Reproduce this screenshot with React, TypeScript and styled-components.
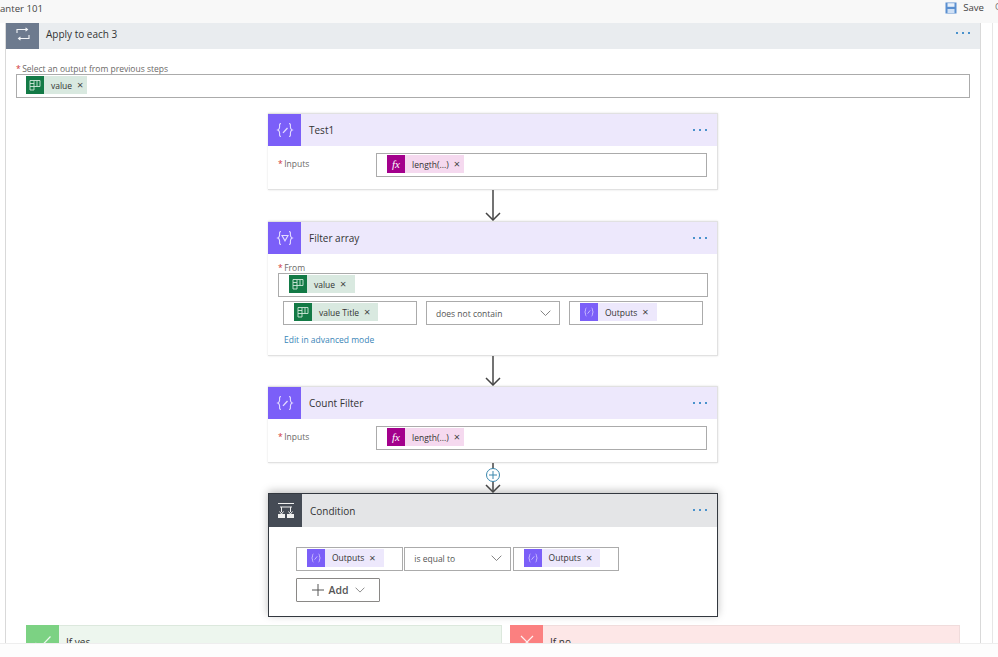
import React from "react";
import styled, { createGlobalStyle } from "styled-components";

const GlobalStyle = createGlobalStyle`
  html, body {
    margin: 0;
    padding: 0;
    background: #fff;
  }
  body {
    font-family: "Open Sans", "Noto Sans", "Liberation Sans", sans-serif;
    color: #3b3a39;
  }
`;

const Page = styled.div`
  width: 998px;
  height: 657px;
  overflow: hidden;
  display: flex;
  flex-direction: column;
  background: #fff;
`;

const TopBar = styled.header`
  flex: none;
  height: 23px;
  background: #f8f8f8;
  display: flex;
  align-items: center;
  font-size: 9.6px;
  color: #444;
  overflow: hidden;
`;

const FlowName = styled.span`
  margin-right: auto;
  padding-bottom: 6px;
`;

const SaveButton = styled.div`
  display: flex;
  align-items: center;
  gap: 6px;
  padding-bottom: 8px;
  margin-right: 11px;
`;

const Cut = styled.span`
  width: 3px;
  overflow: hidden;
  padding-bottom: 11px;
  font-size: 9px;
  color: #777;
`;

const Canvas = styled.main`
  flex: none;
  width: 993px;
  height: 620px;
  overflow: hidden;
  border-right: 1px solid #e6e6e6;
  box-sizing: border-box;
`;

const Loop = styled.section`
  width: 976px;
  margin-left: 5px;
  height: 100%;
  box-sizing: border-box;
  border-left: 1px solid #d9d9d9;
  border-right: 1px solid #d9d9d9;
`;

const Header = styled.div<{ $bg: string; $height: number }>`
  display: flex;
  align-items: center;
  height: ${(p) => p.$height}px;
  background: ${(p) => p.$bg};
`;

const LoopHeader = styled(Header)`
  & > span,
  & > div:last-child,
  svg {
    margin-bottom: 5px;
  }
`;

const HeaderIcon = styled.div<{ $bg: string }>`
  flex: none;
  width: 33px;
  height: 100%;
  background: ${(p) => p.$bg};
  display: flex;
  align-items: center;
  justify-content: center;
`;

const Title = styled.span<{ $gap: number }>`
  flex: 1;
  margin-left: ${(p) => p.$gap}px;
  font-size: 10px;
  color: #333;
`;

const Dots = styled.div`
  display: flex;
  gap: 4px;
  margin-right: 10px;
  padding-bottom: 1px;
`;

const Dot = styled.i`
  display: block;
  width: 2px;
  height: 2px;
  background: #4a92cc;
`;

const LoopBody = styled.div`
  padding: 15px 10px 0;
`;

const Label = styled.div`
  font-size: 8.5px;
  line-height: 10px;
  height: 10px;
  color: #6b6967;
  white-space: nowrap;
`;

const Star = styled.span`
  color: #d13438;
  margin-right: 1.5px;
`;

const Field = styled.div<{ $inset: number; $width?: number }>`
  display: flex;
  align-items: flex-start;
  box-sizing: border-box;
  height: 24px;
  width: ${(p) => (p.$width ? `${p.$width}px` : "100%")};
  flex: none;
  padding: 1px 0 0 ${(p) => p.$inset}px;
  border: 1px solid #ababab;
  background: #fff;
`;

const Token = styled.div<{ $bg: string }>`
  display: flex;
  align-items: center;
  height: 18px;
  background: ${(p) => p.$bg};
  font-size: 8.5px;
  color: #333;
  white-space: nowrap;
`;

const TokenIcon = styled.span<{ $bg: string }>`
  flex: none;
  width: 18px;
  height: 18px;
  background: ${(p) => p.$bg};
  display: flex;
  align-items: center;
  justify-content: center;
  color: #fff;
  font-family: "Liberation Serif", serif;
  font-style: italic;
  font-size: 11px;
`;

const TokenText = styled.span`
  margin-left: 7px;
`;

const Remove = styled.span<{ $end: number }>`
  margin: 0 ${(p) => p.$end}px 0 5px;
  font-size: 11px;
  line-height: 10px;
  color: #444;
`;

const Flow = styled.div`
  margin-top: 15px;
  display: flex;
  flex-direction: column;
  align-items: center;
`;

const Card = styled.article`
  width: 450px;
  box-sizing: border-box;
  border: 1px solid #e1e1e1;
  border-left: 0;
  box-shadow: 0 0 2px rgba(0, 0, 0, 0.12);
  background: #fff;
`;

const InputsBody = styled.div`
  display: flex;
  align-items: flex-start;
  padding: 7px 10px 12px 10px;
`;

const InputsLabel = styled(Label)`
  width: 98px;
  margin-top: 6px;
`;

const FilterBody = styled.div`
  padding: 9px 10px 0;
  height: 101px;
  box-sizing: border-box;
`;

const FilterRow = styled.div`
  display: flex;
  gap: 9.5px;
  margin: 4px 0 0 5px;
`;

const SelectBox = styled.div<{ $width: number }>`
  flex: none;
  width: ${(p) => p.$width}px;
  height: 24px;
  box-sizing: border-box;
  border: 1px solid #ababab;
  padding: 0 8px 0 9px;
  display: flex;
  align-items: center;
  justify-content: space-between;
  font-size: 8.5px;
  color: #555;
`;

const AdvancedLink = styled.a`
  display: block;
  margin: 9px 0 0 6px;
  font-size: 8.5px;
  color: #3a86b8;
`;

const ArrowWrap = styled.div<{ $height: number }>`
  position: relative;
  height: ${(p) => p.$height}px;
  width: 16px;
`;

const PlusBadge = styled.div`
  position: absolute;
  left: 1px;
  top: 5px;
  width: 14px;
  height: 14px;
  box-sizing: border-box;
  border: 1px solid #3a87ad;
  border-radius: 50%;
  background: #fff;
  display: flex;
  align-items: center;
  justify-content: center;
`;

const ConditionCard = styled.article`
  width: 450px;
  height: 124px;
  box-sizing: border-box;
  border: 1.5px solid #33383f;
  box-shadow: 0 -2px 8px rgba(0, 0, 0, 0.25);
  background: #fff;
`;

const ConditionRow = styled.div`
  display: flex;
  gap: 1.5px;
  margin: 19.5px 0 0 27px;
`;

const AddButton = styled.div`
  display: flex;
  align-items: center;
  box-sizing: border-box;
  width: 84px;
  height: 24px;
  margin: 7px 0 0 26.5px;
  padding-left: 15px;
  border: 1px solid #8a8886;
  border-radius: 1px;
  font-size: 10.5px;
  font-weight: 600;
  color: #555;
`;

const AddText = styled.span`
  margin: 0 6px 0 5px;
`;

const Branches = styled.div`
  display: grid;
  grid-template-columns: 476px 450px;
  gap: 8px;
  margin: 8px 10px 0;
`;

const Branch = styled.div<{ $bg: string; $line: string }>`
  height: 33px;
  display: flex;
  align-items: center;
  background: ${(p) => p.$bg};
  box-shadow: inset 0 0 0 1px ${(p) => p.$line};
`;

const BranchTitle = styled.span`
  margin-left: 7px;
  font-size: 10px;
  color: #333;
`;

const Footer = styled.div`
  flex: 1;
  background: #fdfdfd;
  border-top: 1px solid #eee;
`;

const Braces = ({ kind }: { kind: "edit" | "filter" }) => (
  <svg width="18" height="18" viewBox="0 0 18 18" fill="none" stroke="#e4dcff" strokeWidth="1.1">
    <path d="M5 2.5C3.2 2.5 3.6 4 3.6 6S3.6 8.3 1.8 9C3.6 9.7 3.6 10 3.6 12S3.2 15.5 5 15.5" />
    <path d="M13 2.5C14.8 2.5 14.4 4 14.4 6S14.4 8.3 16.2 9C14.4 9.7 14.4 10 14.4 12S14.8 15.5 13 15.5" />
    {kind === "edit" ? (
      <path d="M6.5 11.5L11 6.5L12 7.5L7.5 12.2Z" fill="#e4dcff" stroke="none" />
    ) : (
      <path d="M6 6.5H12L9 11.8Z" />
    )}
  </svg>
);

const SmallVar = () => (
  <svg width="10" height="10" viewBox="0 0 10 10" fill="none" stroke="#d9cfff" strokeWidth="0.8">
    <path d="M2.4 1C1 1 2 4.2 .8 5C2 5.8 1 9 2.4 9" />
    <path d="M7.6 1C9 1 8 4.2 9.2 5C8 5.8 9 9 7.6 9" />
    <path d="M3.6 6.6L6.2 3.4" />
  </svg>
);

const Planner = () => (
  <svg width="12" height="12" viewBox="0 0 12 12" fill="none" stroke="#cfe8da" strokeWidth="0.9">
    <path d="M1 1.5H5V11H1ZM1 4.5H5M1 7.5H5M5 1.5H11V7.5H5M8 1.5V7.5" />
  </svg>
);

const LoopIcon = () => (
  <svg width="18" height="14" viewBox="0 0 18 14" fill="none" stroke="#f2f4f7" strokeWidth="1.1">
    <path d="M3 6V2.5H13.5M11.5 .8L13.5 2.5L11.5 4.2" />
    <path d="M15 8V11.5H4.5M6.5 9.8L4.5 11.5L6.5 13.2" />
  </svg>
);

const ConditionIcon = () => (
  <svg width="20" height="20" viewBox="0 0 20 20" fill="none" stroke="#f0f0f0" strokeWidth="1">
    <path d="M2 2.5H18M4 6H16M5.5 6V11M14.5 6V11" />
    <path d="M2 13H9V17H2ZM11 13H18V17H11Z" fill="#f0f0f0" stroke="none" />
    <path d="M3.5 10.5L5.5 13L7.5 10.5M12.5 10.5L14.5 13L16.5 10.5" />
  </svg>
);

const SaveIcon = () => (
  <svg width="12" height="12" viewBox="0 0 12 12">
    <path d="M.5 .5H11.5V11.5H.5Z" fill="#5a8fd0" />
    <path d="M2.5 1.2H9.5V4.8H2.5Z" fill="#e8f0fa" />
    <path d="M2.5 7H9.5V11H2.5Z" fill="#cfe0f5" />
  </svg>
);

const Chevron = ({ size = 11, color = "#777" }: { size?: number; color?: string }) => (
  <svg width={size} height={size / 2 + 1} viewBox="0 0 12 7" fill="none" stroke={color} strokeWidth="1">
    <path d="M.7 .7L6 6L11.3 .7" />
  </svg>
);

const Arrow = ({ height, plus }: { height: number; plus?: boolean }) => (
  <ArrowWrap $height={height}>
    <svg width="16" height={height} viewBox={`0 0 16 ${height}`} fill="none" stroke="#444" strokeWidth="1.5">
      <path d={`M8 0V${height - 1}`} />
      <path d={`M1 ${height - 8}L8 ${height - 1}L15 ${height - 8}`} />
    </svg>
    {plus && (
      <PlusBadge>
        <svg width="8" height="8" viewBox="0 0 8 8" stroke="#3a87ad" strokeWidth="1">
          <path d="M4 0V8M0 4H8" />
        </svg>
      </PlusBadge>
    )}
  </ArrowWrap>
);

const ValueToken = ({ text, end }: { text: string; end: number }) => (
  <Token $bg="#d9e9e0">
    <TokenIcon $bg="#137a46">
      <Planner />
    </TokenIcon>
    <TokenText>{text}</TokenText>
    <Remove $end={end}>×</Remove>
  </Token>
);

const OutputsToken = () => (
  <Token $bg="#ede8fc">
    <TokenIcon $bg="#7b5ff8">
      <SmallVar />
    </TokenIcon>
    <TokenText>Outputs</TokenText>
    <Remove $end={8}>×</Remove>
  </Token>
);

const LengthToken = () => (
  <Token $bg="#f5d9ef">
    <TokenIcon $bg="#a3008c">fx</TokenIcon>
    <TokenText>length(...)</TokenText>
    <Remove $end={4}>×</Remove>
  </Token>
);

const More = () => (
  <Dots>
    <Dot />
    <Dot />
    <Dot />
  </Dots>
);

const ComposeCard = ({ title }: { title: string }) => (
  <Card>
    <Header $bg="#ede8fc" $height={32}>
      <HeaderIcon $bg="#7b5ff8">
        <Braces kind="edit" />
      </HeaderIcon>
      <Title $gap={8}>{title}</Title>
      <More />
    </Header>
    <InputsBody>
      <InputsLabel>
        <Star>*</Star>Inputs
      </InputsLabel>
      <Field $inset={10} $width={331}>
        <LengthToken />
      </Field>
    </InputsBody>
  </Card>
);

export default function App() {
  return (
    <Page>
      <GlobalStyle />
      <TopBar>
        <FlowName>anter 101</FlowName>
        <SaveButton>
          <SaveIcon />
          Save
        </SaveButton>
        <Cut>C</Cut>
      </TopBar>
      <Canvas>
        <Loop>
          <LoopHeader $bg="#e9ecef" $height={26}>
            <HeaderIcon $bg="#6d7a8e">
              <LoopIcon />
            </HeaderIcon>
            <Title $gap={7}>Apply to each 3</Title>
            <More />
          </LoopHeader>
          <LoopBody>
            <Label>
              <Star>*</Star>Select an output from previous steps
            </Label>
            <Field $inset={9}>
              <ValueToken text="value" end={4} />
            </Field>
            <Flow>
              <ComposeCard title="Test1" />
              <Arrow height={31} />
              <Card>
                <Header $bg="#ede8fc" $height={32}>
                  <HeaderIcon $bg="#7b5ff8">
                    <Braces kind="filter" />
                  </HeaderIcon>
                  <Title $gap={8}>Filter array</Title>
                  <More />
                </Header>
                <FilterBody>
                  <Label>
                    <Star>*</Star>From
                  </Label>
                  <Field $inset={10} $width={430}>
                    <ValueToken text="value" end={9} />
                  </Field>
                  <FilterRow>
                    <Field $inset={10} $width={133.5}>
                      <ValueToken text="value Title" end={8} />
                    </Field>
                    <SelectBox $width={133.5}>
                      does not contain
                      <Chevron />
                    </SelectBox>
                    <Field $inset={10} $width={133.5}>
                      <OutputsToken />
                    </Field>
                  </FilterRow>
                  <AdvancedLink>Edit in advanced mode</AdvancedLink>
                </FilterBody>
              </Card>
              <Arrow height={30} />
              <ComposeCard title="Count Filter" />
              <Arrow height={30} plus />
              <ConditionCard>
                <Header $bg="#e4e5e7" $height={33}>
                  <HeaderIcon $bg="#454b55">
                    <ConditionIcon />
                  </HeaderIcon>
                  <Title $gap={8}>Condition</Title>
                  <More />
                </Header>
                <ConditionRow>
                  <Field $inset={10} $width={106.8}>
                    <OutputsToken />
                  </Field>
                  <SelectBox $width={106.8}>
                    is equal to
                    <Chevron />
                  </SelectBox>
                  <Field $inset={10} $width={106.8}>
                    <OutputsToken />
                  </Field>
                </ConditionRow>
                <AddButton>
                  <svg width="12" height="12" viewBox="0 0 12 12" stroke="#555" strokeWidth="1">
                    <path d="M6 0V12M0 6H12" />
                  </svg>
                  <AddText>Add</AddText>
                  <Chevron size={10} />
                </AddButton>
              </ConditionCard>
            </Flow>
            <Branches>
              <Branch $bg="#edf6ee" $line="#dce8dd">
                <HeaderIcon $bg="#7cd283">
                  <svg width="18" height="14" viewBox="0 0 18 14" fill="none" stroke="#eefaf0" strokeWidth="1.2">
                    <path d="M1.5 8L6 12.5L16.5 1.5" />
                  </svg>
                </HeaderIcon>
                <BranchTitle>If yes</BranchTitle>
              </Branch>
              <Branch $bg="#fde7e7" $line="#f0dcdc">
                <HeaderIcon $bg="#fb8080">
                  <svg width="14" height="14" viewBox="0 0 14 14" fill="none" stroke="#fff0f0" strokeWidth="1.2">
                    <path d="M1 1L13 13M13 1L1 13" />
                  </svg>
                </HeaderIcon>
                <BranchTitle>If no</BranchTitle>
              </Branch>
            </Branches>
          </LoopBody>
        </Loop>
      </Canvas>
      <Footer />
    </Page>
  );
}
